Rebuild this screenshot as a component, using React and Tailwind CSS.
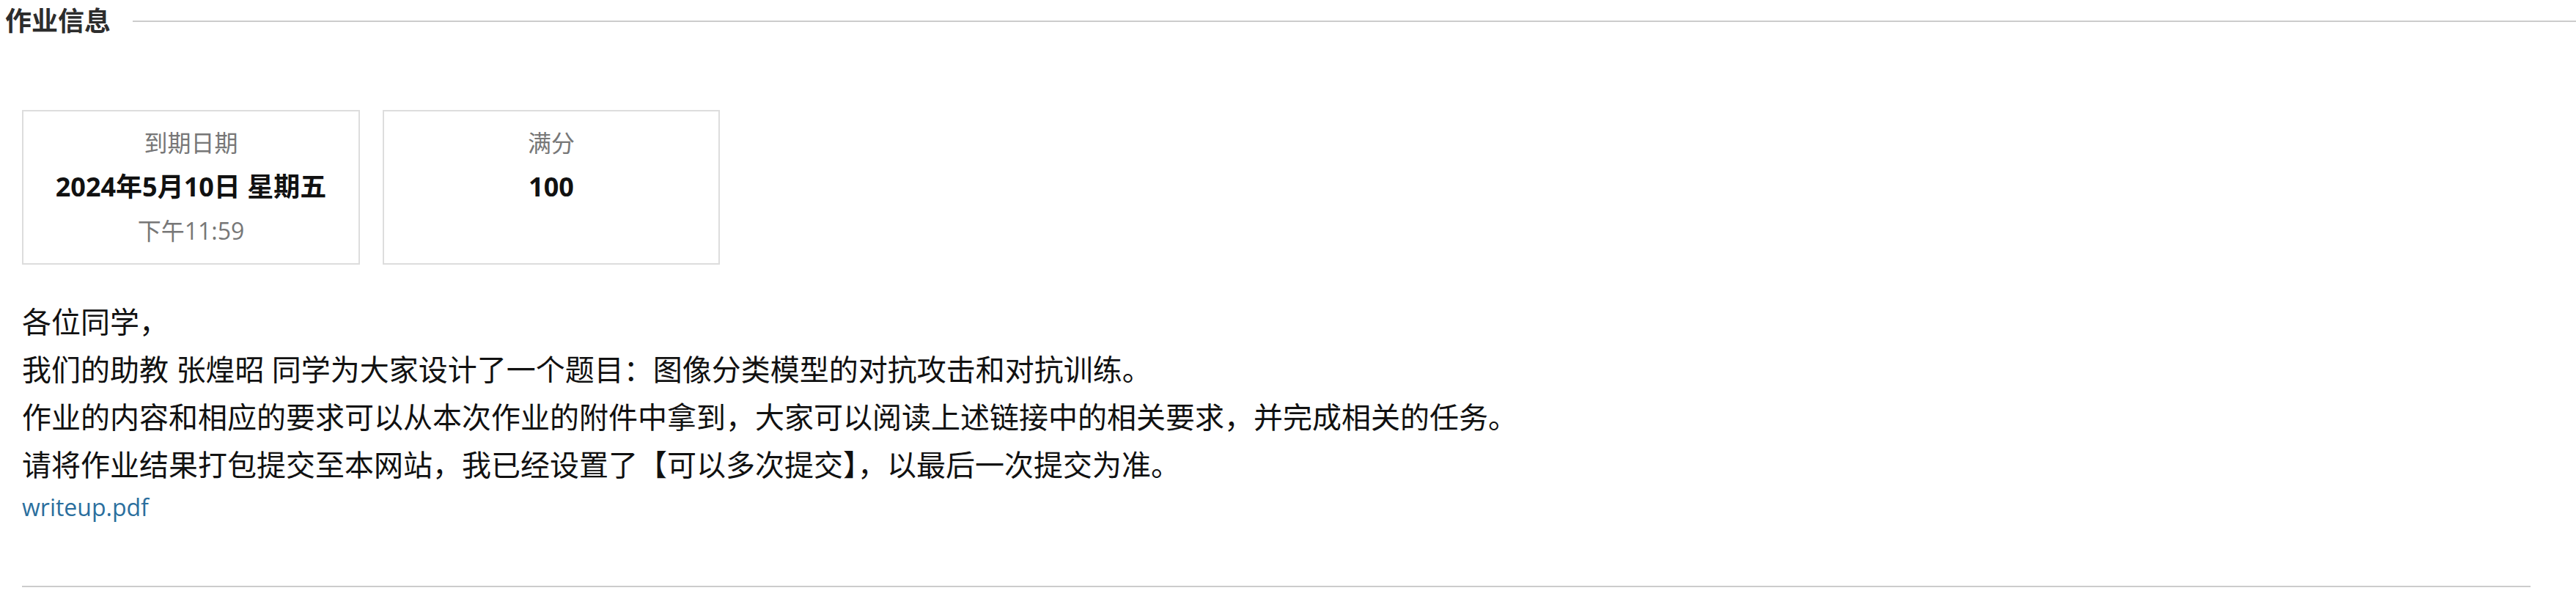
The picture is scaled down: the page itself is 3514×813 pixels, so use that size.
export default function App() {
  const font = { fontFamily: '"Open Sans", "Noto Sans CJK SC", sans-serif' };
  return (
    <div className="w-[3514px] h-[813px] bg-white overflow-hidden font-['Open_Sans','Noto_Sans_CJK_SC',sans-serif]" style={font}>
      <div className="flex items-center h-[58px] pl-[7px]">
        <h2 className="text-[36px] font-bold leading-[58px] text-[#2d2d2d] whitespace-nowrap">作业信息</h2>
        <div className="flex-1 ml-[30px] h-[2px] bg-[#cccccc]" />
      </div>
      <div className="pl-[30px] pr-[62px]">
        <div className="flex gap-[31px] mt-[92px]">
          <div className="w-[461px] h-[211px] border-2 border-[#dddddd] flex flex-col items-center pt-[13px]">
            <div className="h-[60px] leading-[60px] text-[32px] text-[#777777]">到期日期</div>
            <div className="h-[60px] leading-[60px] text-[36px] font-bold text-[#111111] whitespace-nowrap">2024年5月10日 星期五</div>
            <div className="h-[60px] leading-[60px] text-[32px] text-[#777777]">下午11:59</div>
          </div>
          <div className="w-[460px] h-[211px] border-2 border-[#dddddd] flex flex-col items-center pt-[13px]">
            <div className="h-[60px] leading-[60px] text-[32px] text-[#777777]">满分</div>
            <div className="h-[60px] leading-[60px] text-[36px] font-bold text-[#111111]">100</div>
          </div>
        </div>
        <div className="mt-[45px] text-[40px] leading-[65px] text-[#111111]">
          <p>各位同学，</p>
          <p>我们的助教 张煌昭 同学为大家设计了一个题目：图像分类模型的对抗攻击和对抗训练。</p>
          <p>作业的内容和相应的要求可以从本次作业的附件中拿到，大家可以阅读上述链接中的相关要求，并完成相关的任务。</p>
          <p>请将作业结果打包提交至本网站，我已经设置了【可以多次提交】，以最后一次提交为准。</p>
        </div>
        <div className="text-[32px] leading-[51px]">
          <a href="#" className="text-[#2b6f9e]">writeup.pdf</a>
        </div>
        <div className="mt-[82px] h-[2px] bg-[#cccccc]" />
      </div>
    </div>
  );
}
